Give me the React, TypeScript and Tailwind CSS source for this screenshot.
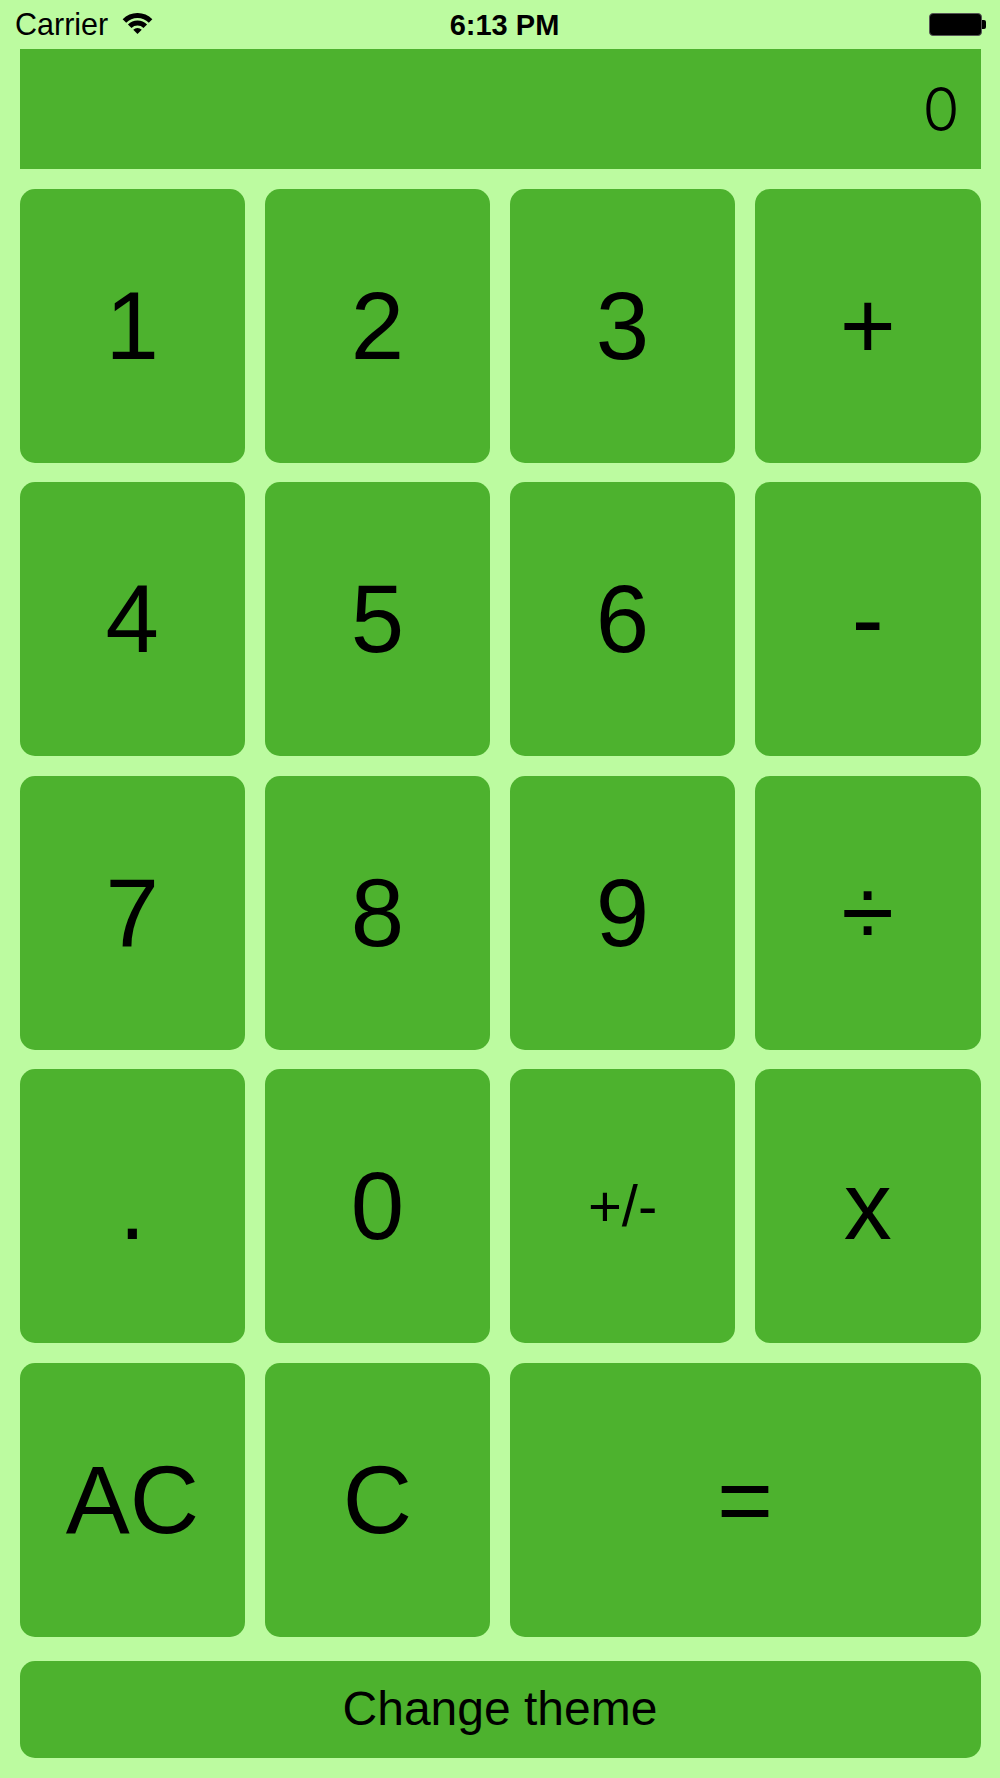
import React from "react";

const Btn = ({ label, className = "" }: { label: string; className?: string }) => (
  <div
    className={`bg-[#4db22e] rounded-[15px] h-[274px] flex items-center justify-center text-black text-[96px] leading-none ${className}`}
  >
    {label}
  </div>
);

export default function App() {
  const rows: { label: string; className?: string }[] = [
    { label: "1" },
    { label: "2" },
    { label: "3" },
    { label: "+" },
    { label: "4" },
    { label: "5" },
    { label: "6" },
    { label: "-" },
    { label: "7" },
    { label: "8" },
    { label: "9" },
    { label: "÷" },
    { label: "." },
    { label: "0" },
    { label: "+/-", className: "!text-[58px]" },
    { label: "x" },
    { label: "AC" },
    { label: "C" },
    { label: "=", className: "col-span-2" },
  ];
  return (
    <div
      className="w-[1000px] h-[1778px] bg-[#bcfba0] flex flex-col text-black overflow-hidden"
      style={{ fontFamily: '"Liberation Sans", Arial, sans-serif' }}
    >
      {/* status bar */}
      <div className="h-[48.5px] grid grid-cols-3 items-center pl-[15px] pr-[14px] pt-[2px] text-[29px]">
        <div className="flex items-center gap-[14px]">
          <span className="text-[30.5px]">Carrier</span>
          <svg width="31" height="21" viewBox="0 0 31 21" className="mt-[-4px]">
            <path d="M0.65 6.15 A21 21 0 0 1 30.35 6.15 L26.81 9.69 A16 16 0 0 0 4.19 9.69 Z" fill="black" />
            <path d="M5.95 11.45 A13.5 13.5 0 0 1 25.05 11.45 L21.51 14.99 A8.5 8.5 0 0 0 9.49 14.99 Z" fill="black" />
            <path d="M15.5 21 L11.26 16.76 A6 6 0 0 1 19.74 16.76 Z" fill="black" />
          </svg>
        </div>
        <div className="text-center font-bold pl-[8px]">6:13 PM</div>
        <div className="flex justify-end items-center">
          <div className="w-[53px] h-[23px] rounded-[4px] border-[1.5px] border-[#555] bg-black mt-[-2px]" />
          <div className="w-[4px] h-[9px] rounded-r-[2px] bg-black mt-[-2px]" />
        </div>
      </div>

      <div className="px-[19.5px] flex flex-col">
        {/* display */}
        <div className="h-[120.5px] bg-[#4db22e] flex items-center justify-end pr-[21px]">
          <span
            className="text-[60px] font-light leading-none"
            style={{ fontFamily: "Inter, sans-serif" }}
          >
            0
          </span>
        </div>

        {/* keypad */}
        <div className="grid grid-cols-4 gap-x-[19.5px] gap-y-[19.4px] mt-[20px]">
          {rows.map((r, i) => (
            <Btn key={i} label={r.label} className={r.className} />
          ))}
        </div>

        <div className="mt-[24px] h-[97px] bg-[#4db22e] rounded-[15px] flex items-center justify-center text-[48px] leading-none">
          Change theme
        </div>
      </div>
    </div>
  );
}
